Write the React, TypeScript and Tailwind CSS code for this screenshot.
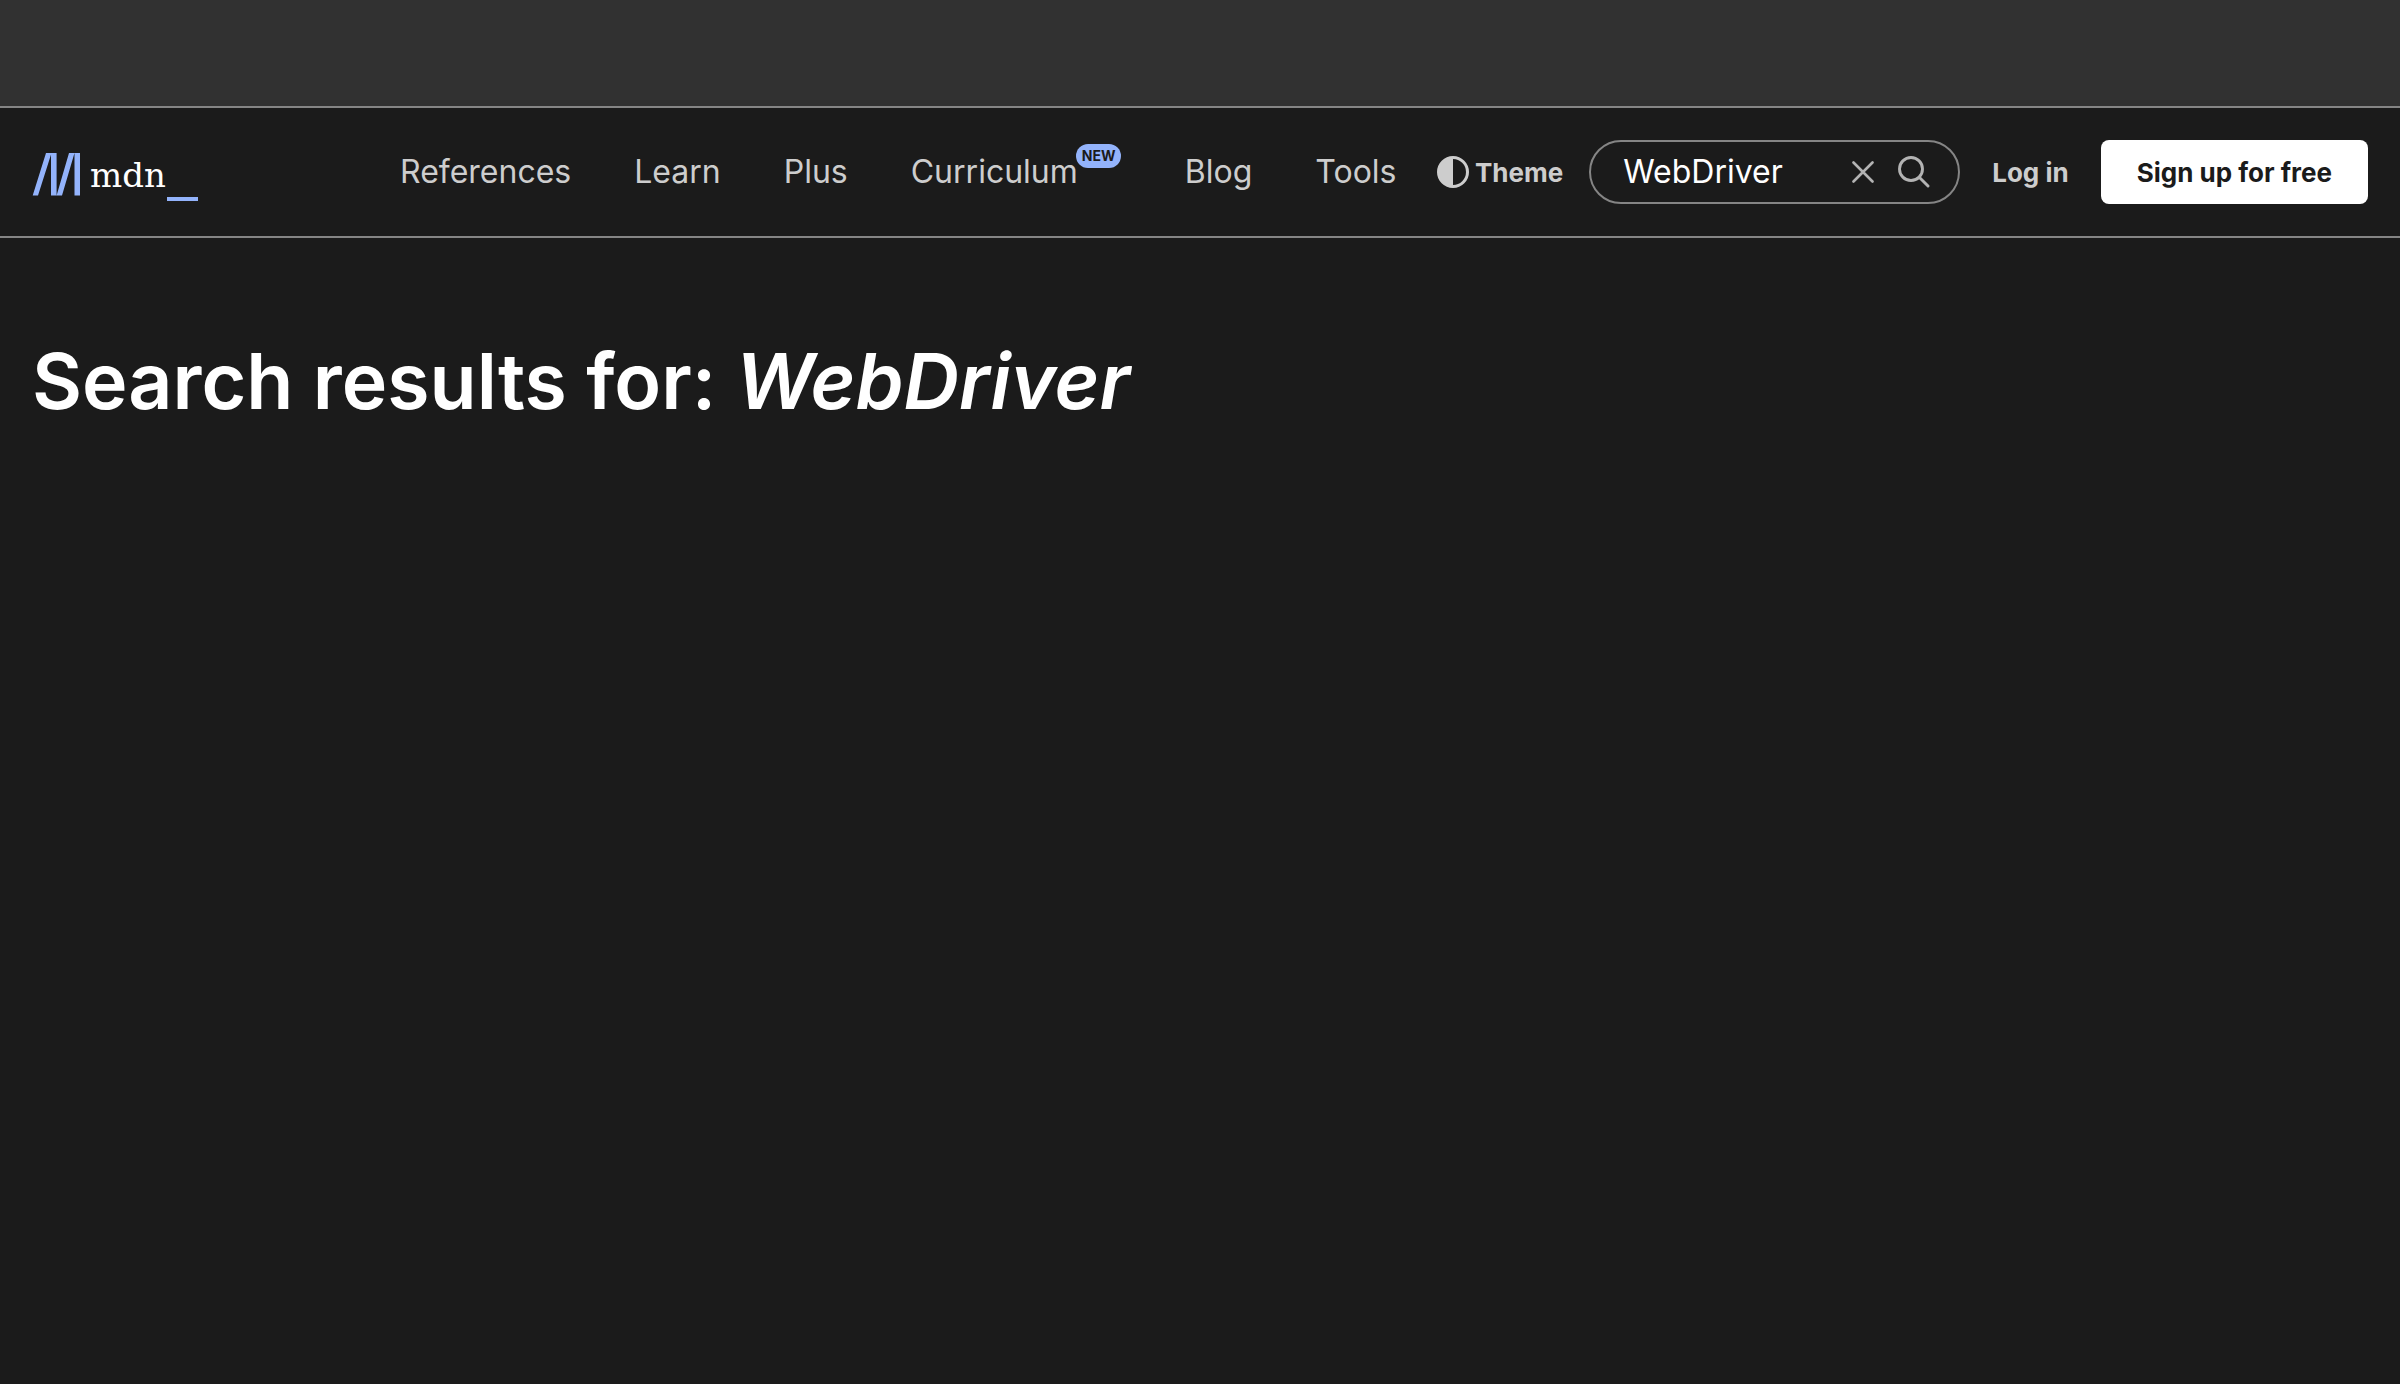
import React from "react";

const navStart = ["References", "Learn", "Plus"];
const navEnd = ["Blog", "Tools"];

function NavLink({ label }: { label: string }) {
  return (
    <a href={`#${label.toLowerCase()}`} className="whitespace-nowrap">
      {label}
    </a>
  );
}

function Logo() {
  return (
    <svg width="168" height="64" viewBox="0 0 168 64" aria-hidden="true">
      <path
        d="M14 13h5.500L6 55.500H.7zM19 13h5.600v42.500H19zM37 13h5.500L30 55.500h-5.400zM42.500 13H48v42.500h-5.500z"
        fill="#93b3fb"
      />
      <rect x="135" y="57" width="31" height="4" fill="#93b3fb" />
      <text x="58" y="47" fontSize="34" fontFamily="'DejaVu Serif', serif" fill="#fff">
        mdn
      </text>
    </svg>
  );
}

export default function App() {
  return (
    <div className="flex min-h-screen flex-col bg-[#1b1b1b] font-['Inter',sans-serif] text-[#cdcdcd]">
      <div className="h-[106px] shrink-0 bg-[#313131]" />
      <header className="flex h-[132px] shrink-0 items-center border-y-2 border-[#858585] px-8">
        <a href="#home" aria-label="mdn" className="mr-[200px] shrink-0">
          <Logo />
        </a>
        <nav className="flex items-center gap-[63px] text-[32px]">
          {navStart.map((label) => (
            <NavLink key={label} label={label} />
          ))}
          <a href="#curriculum" className="relative mr-11 whitespace-nowrap">
            Curriculum
            <sup className="absolute top-[-4px] left-full -ml-0.5 flex h-6 items-center rounded-full bg-[#93b3fb] px-1.5 text-sm font-bold text-[#1b1b1b]">
              NEW
            </sup>
          </a>
          {navEnd.map((label) => (
            <NavLink key={label} label={label} />
          ))}
        </nav>
        <div className="ml-auto flex shrink-0 items-center text-[26px] font-bold">
          <button type="button" className="mr-[26px] flex items-center gap-1.5">
            <svg width="32" height="32" viewBox="0 0 32 32" aria-hidden="true">
              <circle cx="16" cy="16" r="14.500" fill="none" stroke="#cdcdcd" strokeWidth="3" />
              <path d="M16 1a15 15 0 0 0 0 30z" fill="#cdcdcd" />
            </svg>
            Theme
          </button>
          <form
            role="search"
            className="mr-8 flex h-16 w-[371px] items-center rounded-full border-2 border-[#858585] pr-7 pl-8"
          >
            <input
              type="text"
              aria-label="Search MDN"
              defaultValue="WebDriver"
              className="min-w-0 flex-1 bg-transparent text-[32px] font-normal text-white outline-none"
            />
            <button type="reset" aria-label="Clear search" className="mr-6">
              <svg width="22" height="32" viewBox="0 0 22 32" fill="none" stroke="#b3b3b3" strokeWidth="2.600" strokeLinecap="round" aria-hidden="true">
                <path d="M1.500 6.500l19 19M20.500 6.500l-19 19" />
              </svg>
            </button>
            <button type="submit" aria-label="Search">
              <svg width="32" height="32" viewBox="0 0 32 32" fill="none" stroke="#b3b3b3" strokeWidth="2.900" strokeLinecap="round" aria-hidden="true">
                <circle cx="13" cy="13" r="11.500" />
                <path d="M21.500 21.500l8.500 8.500" />
              </svg>
            </button>
          </form>
          <a href="#login" className="mr-8 whitespace-nowrap">
            Log in
          </a>
          <a
            href="#signup"
            className="flex h-16 items-center rounded-lg bg-white px-9 whitespace-nowrap text-[#1b1b1b]"
          >
            Sign up for free
          </a>
        </div>
      </header>
      <main className="px-8 pt-24">
        <h1 className="text-[77px] leading-[94px] font-semibold text-white">
          Search results for: <em>WebDriver</em>
        </h1>
      </main>
    </div>
  );
}
